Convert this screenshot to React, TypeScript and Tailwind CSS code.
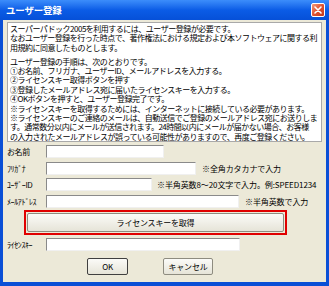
import React from 'react';

const font = { fontFamily: '"MS UI Gothic", "Noto Sans CJK JP", sans-serif' };

const introLines = [
  'スーパーパドック2005を利用するには、ユーザー登録が必要です。',
  'なおユーザー登録を行った時点で、著作権法における規定および本ソフトウェアに関する利',
  '用規約に同意したものとします。',
  '',
  'ユーザー登録の手順は、次のとおりです。',
  '①お名前、フリガナ、ユーザーID、メールアドレスを入力する。',
  '②ライセンスキー取得ボタンを押す',
  '③登録したメールアドレス宛に届いたライセンスキーを入力する。',
  '④OKボタンを押すと、ユーザー登録完了です。',
  '※ライセンスキーを取得するためには、インターネットに接続している必要があります。',
  '※ライセンスキーのご連絡のメールは、自動送信でご登録のメールアドレス宛にお送りしま',
  'す。通常数分以内にメールが送信されます。24時間以内にメールが届かない場合、お客様',
  'の入力されたメールアドレスが誤っている可能性がありますので、再度ご登録ください。',
];

function Field({ width }: { width: string }) {
  return (
    <div
      className={`h-[13px] ${width} bg-white border border-t-[#8a8a8a] border-l-[#8a8a8a] border-b-[#f0f0f0] border-r-[#f0f0f0]`}
    />
  );
}

function Row({ label, width, hint, hintGap, top }: { label: string; width: string; hint?: string; hintGap?: string; top: string }) {
  return (
    <div className={`flex items-center h-[13px] ${top}`}>
      <span className="w-[39px] shrink-0 text-[8px] leading-[10px] tracking-[-0.4px] whitespace-nowrap text-black">{label}</span>
      <Field width={width} />
      {hint && (
        <span className={`${hintGap} text-[8px] leading-[10px] tracking-[-0.1px] whitespace-nowrap text-black`}>{hint}</span>
      )}
    </div>
  );
}

function XpButton({ children, width, strong }: { children: React.ReactNode; width: string; strong?: boolean }) {
  return (
    <div
      className={`${width} h-[17px] flex items-center justify-center rounded-[2px] bg-gradient-to-b from-[#fbfbf8] to-[#e6e4d8] text-[8px] tracking-[-0.2px] text-black ${
        strong ? 'border border-[#404040]' : 'border border-[#8e8c80]'
      }`}
    >
      {children}
    </div>
  );
}

export default function App() {
  return (
    <div className="w-[329px] h-[286px] flex flex-col bg-[#0a4fd6] select-none" style={font}>
      {/* title bar */}
      <div className="h-[20px] shrink-0 flex items-center justify-between pl-[6px] pr-[4px] bg-gradient-to-b from-[#3c8dfb] via-[#0b5ce6] to-[#0650d8]">
        <span className="text-[9.5px] font-bold text-white tracking-[-0.2px]">ユーザー登録</span>
        <div className="w-[14px] h-[14px] rounded-[2px] border border-white bg-gradient-to-br from-[#f09a7c] via-[#e0512f] to-[#c23a1c] flex items-center justify-center">
          <svg width="8" height="8" viewBox="0 0 8 8">
            <path d="M1 1 L7 7 M7 1 L1 7" stroke="white" strokeWidth="1.6" strokeLinecap="round" />
          </svg>
        </div>
      </div>

      {/* body */}
      <div className="flex-1 mx-[3px] mb-[4px] bg-[#ece9d8] pl-[4px] flex flex-col">
        <div className="mt-[2px] w-[315px] h-[120px] bg-white border border-[#a9a9a9] pl-[2px] pt-[1px] overflow-hidden">
          {introLines.map((line, i) =>
            line ? (
              <div key={i} className="h-[9.4px] text-[8px] leading-[9.4px] tracking-[-0.5px] whitespace-nowrap text-black">
                {line}
              </div>
            ) : (
              <div key={i} className="h-[4.5px]" />
            ),
          )}
        </div>

        <Row label="お名前" width="w-[118px]" top="mt-[3px]" />
        <Row label="ﾌﾘｶﾞﾅ" width="w-[150px]" hint="※全角カタカナで入力" hintGap="ml-[6px]" top="mt-[4px]" />
        <Row label="ﾕｰｻﾞｰID" width="w-[106px]" hint="※半角英数8〜20文字で入力。例:SPEED1234" hintGap="ml-[5px]" top="mt-[3px]" />
        <Row label="ﾒｰﾙｱﾄﾞﾚｽ" width="w-[193px]" hint="※半角英数で入力" hintGap="ml-[6px]" top="mt-[4px]" />

        <div className="mt-[2px] ml-[17px] w-[263px] h-[25px] border-2 border-[#e00000] p-[1px] flex">
          <div className="w-full h-full flex items-center justify-center bg-gradient-to-b from-[#fbfbf8] to-[#e6e4d8] border border-[#8e8c80] rounded-[2px] text-[8px] tracking-[-0.2px] text-black">
            ライセンスキーを取得
          </div>
        </div>

        <Row label="ﾗｲｾﾝｽｷｰ" width="w-[194px]" top="mt-[3px]" />

        <div className="mt-[7px] flex">
          <div className="ml-[80px]">
            <XpButton width="w-[41px]" strong>
              OK
            </XpButton>
          </div>
          <div className="ml-[35px]">
            <XpButton width="w-[50px]">キャンセル</XpButton>
          </div>
        </div>
      </div>
    </div>
  );
}
